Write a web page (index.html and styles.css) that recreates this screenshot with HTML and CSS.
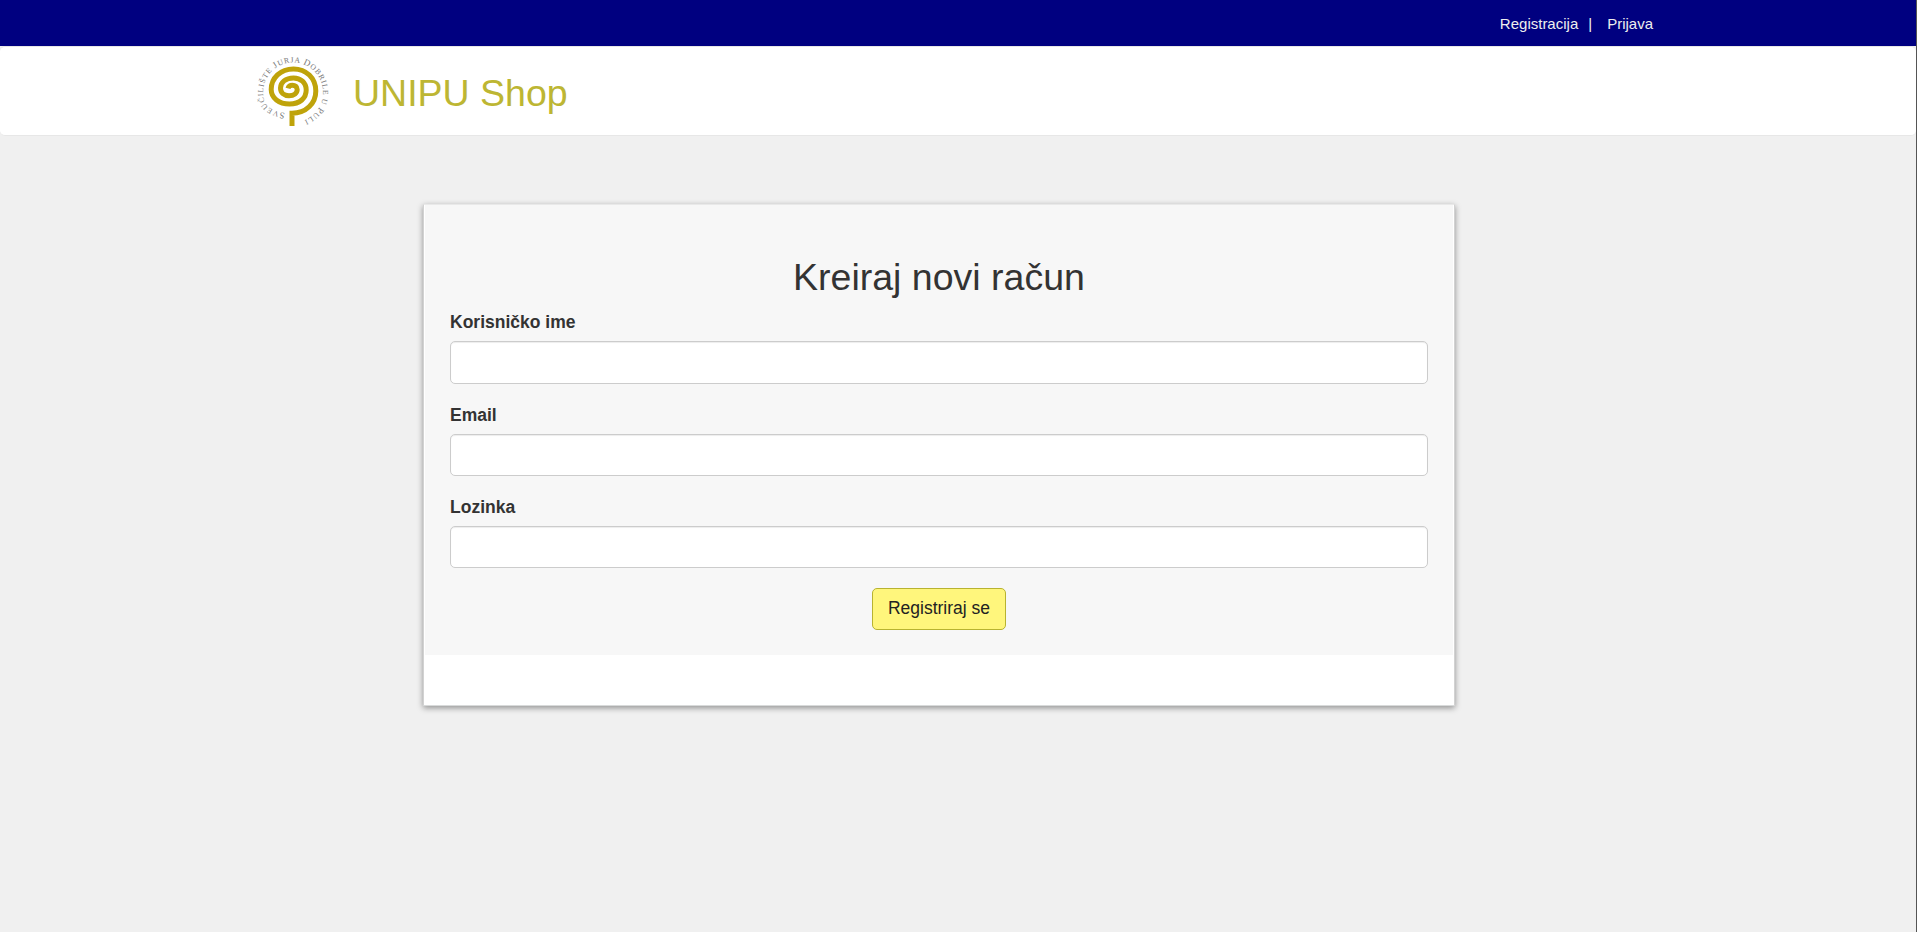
FILE: index.html
```html
<!DOCTYPE html>
<html lang="hr">
<head>
<meta charset="utf-8">
<title>UNIPU Shop</title>
<link rel="stylesheet" href="styles.css">
</head>
<body>
<div class="page">
  <div class="topbar">
    <a href="#">Registracija</a><span class="divider">|</span><a href="#">Prijava</a>
  </div>
  <header class="navbar">
    <svg class="logo" viewBox="0 0 80 80" aria-hidden="true">
      <defs><path id="ring" d="M33 65Q18 63 12.800 54.500A30 30 0 1 1 48.500 73.500"/></defs>
      <path class="spiral" d="M40 78V65.200C54 65.200 63.800 55.500 63.800 43C63.800 30 54 20.900 41.500 20.900C28.500 20.900 19.200 30 19.200 41.500C19.200 50 27 56 37.500 56C48 56 54.200 50 54.200 42C54.200 34.500 48.500 29.900 41.500 29.900C33.500 29.900 28.500 34.500 28.500 40C28.500 44.800 32 47.700 37 47.700C42 47.700 45.200 45 45.200 41.500C45.200 38.500 43 37.300 40.500 37.300C38 37.300 36.500 38.500 36 40.300"/>
      <text class="motto"><textPath href="#ring" textLength="163" lengthAdjust="spacing"><tspan class="cap">S</tspan>VEUČILIŠTE <tspan class="cap">J</tspan>URJA <tspan class="cap">D</tspan>OBRILE U <tspan class="cap">P</tspan>ULI</textPath></text>
    </svg>
    <a class="brand" href="#">UNIPU Shop</a>
  </header>
  <main class="card">
    <form class="form">
      <h2>Kreiraj novi račun</h2>
      <label for="user">Korisničko ime</label>
      <input id="user" type="text">
      <label for="email">Email</label>
      <input id="email" type="email">
      <label for="pass">Lozinka</label>
      <input id="pass" type="password">
      <button type="button">Registriraj se</button>
    </form>
  </main>
</div>
</body>
</html>
```
FILE: styles.css
```css
* { box-sizing: border-box; }
body {
  margin: 0;
  background: #f0f0f0;
  color: #333;
  font-family: "Liberation Sans", Arial, sans-serif;
  font-size: 17.5px;
}
a { color: inherit; text-decoration: none; }
.page { min-height: 932px; border-right: 1px solid #555; }
.topbar {
  display: flex;
  justify-content: flex-end;
  height: 46px;
  padding: 15px 263px 0 0;
  background: #000080;
  color: #eee;
  font-size: 15px;
  line-height: 18px;
}
.divider { margin: 0 15px 0 10px; }
.navbar {
  display: flex;
  height: 90px;
  padding-left: 252px;
  background: #fff;
  border: 1px solid #e7e7e7;
  border-left: 0;
  border-right: 0;
  border-radius: 5px;
}
.logo { width: 80px; height: 80px; margin-top: 1px; overflow: visible; }
.spiral { fill: none; stroke: #bfa30a; stroke-width: 5; }
.motto { fill: #777; font-family: "Liberation Serif", serif; font-size: 7.7px; }
.cap { font-size: 9px; }
.brand { margin: 25px 0 0 21px; color: #bdb633; font-size: 37.5px; line-height: 43px; }
.card {
  width: 1032px;
  height: 502px;
  margin: 68px 0 0 423px;
  padding: 0 1px;
  background: #fff;
  border: 1px solid #d2d2d2;
  border-top-color: #e9e9e9;
  border-bottom-color: #d8dada;
  box-shadow: 0 2px 6px rgba(0, 0, 0, .4);
}
.form {
  display: flex;
  flex-direction: column;
  height: 450px;
  padding: 51.4px 25px 0;
  background: #f7f7f7;
}
h2 { margin: 0 0 12px; font-size: 37.5px; font-weight: 400; line-height: 42px; text-align: center; }
label { margin-bottom: 6px; font-weight: 700; line-height: 25px; }
input {
  height: 42.5px;
  margin-bottom: 18.75px;
  padding: 7px 15px;
  border: 1px solid #ccc;
  border-radius: 5px;
  background: #fff;
  box-shadow: inset 0 1px 1px rgba(0, 0, 0, .075);
}
button {
  align-self: center;
  width: 134px;
  height: 42px;
  margin-top: .75px;
  padding: 0;
  border: 1px solid #b8b330;
  border-radius: 5px;
  background: #fff67c;
  color: #222;
  font: 17.5px "Liberation Sans", Arial, sans-serif;
}
```
